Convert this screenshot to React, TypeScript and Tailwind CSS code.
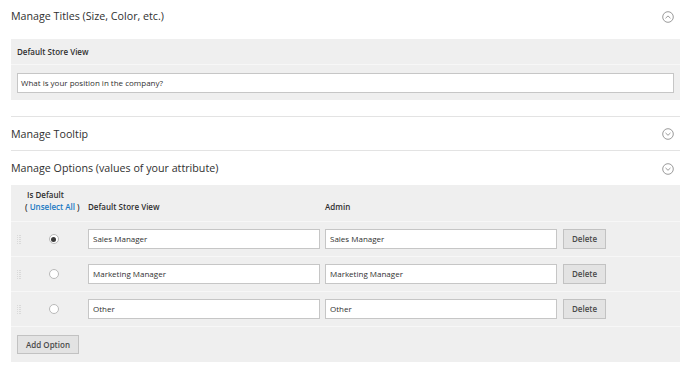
import React from 'react';

function CircleChevron({ up }: { up?: boolean }) {
  return (
    <svg width="12" height="12" viewBox="0 0 12 12" fill="none" stroke="#8f8f8f" strokeWidth="0.9">
      <circle cx="6" cy="6" r="5.3" />
      {up ? (
        <path d="M3.8 7 L6 4.9 L8.2 7" strokeLinecap="round" strokeLinejoin="round" />
      ) : (
        <path d="M3.8 5.2 L6 7.3 L8.2 5.2" strokeLinecap="round" strokeLinejoin="round" />
      )}
    </svg>
  );
}

function DragHandle() {
  return (
    <svg width="4" height="9" viewBox="0 0 4 9" fill="#dadada">
      {[0, 2, 4, 6, 8].map((y) => (
        <React.Fragment key={y}>
          <rect x="0" y={y} width="1" height="1" />
          <rect x="2" y={y} width="1" height="1" />
          <rect x="3" y={y} width="1" height="1" />
        </React.Fragment>
      ))}
    </svg>
  );
}

function Radio({ checked }: { checked?: boolean }) {
  return (
    <span className="w-[10px] h-[10px] rounded-full border border-[#b9b9b9] bg-white flex items-center justify-center">
      {checked && <span className="w-[5px] h-[5px] rounded-full bg-[#3a3a3a]" />}
    </span>
  );
}

function SectionHeader({ title, up, className }: { title: string; up?: boolean; className?: string }) {
  return (
    <div className={`flex items-center justify-between pr-[6px] ${className ?? ''}`}>
      <span className="text-[10.7px] text-[#303030]">{title}</span>
      <CircleChevron up={up} />
    </div>
  );
}

const options = ['Sales Manager', 'Marketing Manager', 'Other'];

export default function App() {
  return (
    <div className="w-[685px] h-[369px] bg-white pl-[11px] pr-[5px] font-['Open_Sans',sans-serif] text-[#303030] overflow-hidden">
      {/* Manage Titles */}
      <SectionHeader title="Manage Titles (Size, Color, etc.)" up className="h-[39px] pb-[6px]" />
      <div className="bg-[#efefef]">
        <div className="h-[26px] flex items-center pl-[6px] text-[8px] font-semibold border-b border-[#f7f7f7]">
          Default Store View
        </div>
        <div className="h-[35px] flex items-center px-[6px]">
          <div className="w-full h-[20px] bg-white border border-[#c6c6c6] flex items-center pl-[3px] text-[8px]">
            What is your position in the company?
          </div>
        </div>
      </div>

      <div className="h-[16px]" />
      <div className="border-t border-[#e3e3e3]">
        <SectionHeader title="Manage Tooltip" className="h-[33px] pt-[1px]" />
      </div>
      <div className="border-t border-[#e3e3e3]">
        <SectionHeader title="Manage Options (values of your attribute)" className="h-[34px] pt-[1px]" />
      </div>

      {/* Options panel */}
      <div className="bg-[#efefef] text-[8px]">
        <div className="h-[37px] flex items-end pb-[8px] pl-[14px] border-b border-[#f7f7f7]">
          <div className="w-[63px] leading-[12px] font-semibold">
            <div className="pl-[2px]">Is Default</div>
            <div>
              ( <span className="text-[#1979c3]">Unselect All</span> )
            </div>
          </div>
          <div className="w-[237px] font-semibold leading-[12px]">Default Store View</div>
          <div className="font-semibold leading-[12px]">Admin</div>
        </div>
        {options.map((o, i) => (
          <div key={o} className="h-[35px] flex items-center pl-[6px] border-b border-[#f7f7f7]">
            <div className="w-[8px] flex items-center">
              <DragHandle />
            </div>
            <div className="w-[57px] flex justify-center">
              <Radio checked={i === 0} />
            </div>
            <div className="ml-[6px] w-[232px] h-[20px] bg-white border border-[#c6c6c6] flex items-center pl-[4px]">{o}</div>
            <div className="ml-[5px] w-[232px] h-[20px] bg-white border border-[#c6c6c6] flex items-center pl-[4px]">{o}</div>
            <div className="ml-[6px] w-[43px] h-[20px] bg-[#e3e3e3] border border-[#c2c2c2] flex items-center justify-center font-semibold text-[#4a4a4a]">
              Delete
            </div>
          </div>
        ))}
        <div className="h-[35px] flex items-center pl-[6px]">
          <div className="w-[62px] h-[19px] bg-[#e3e3e3] border border-[#c2c2c2] flex items-center justify-center font-semibold text-[#4a4a4a]">
            Add Option
          </div>
        </div>
      </div>
    </div>
  );
}
